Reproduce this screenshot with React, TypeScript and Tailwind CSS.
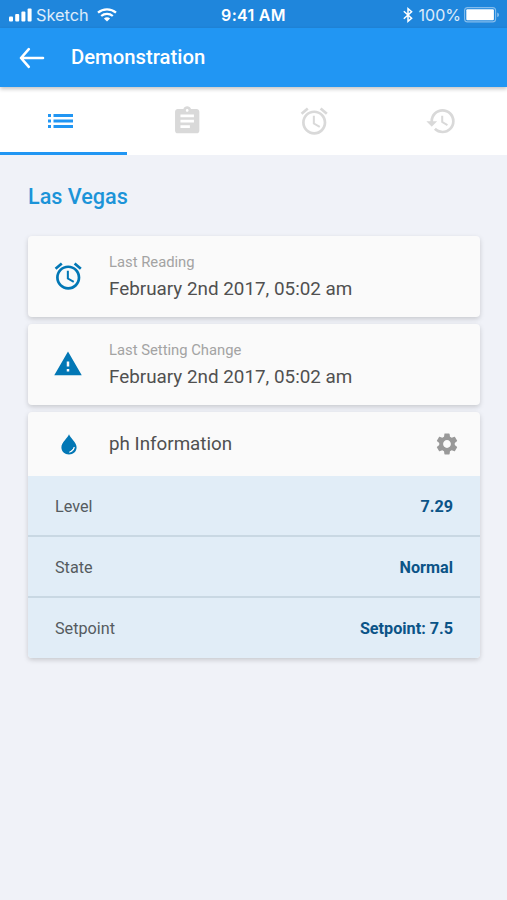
import React from "react";
import { MdAlarm, MdAssignment, MdHistory, MdSettings, MdWarning } from "react-icons/md";

const readings = [
  { label: "Level", value: "7.29" },
  { label: "State", value: "Normal" },
  { label: "Setpoint", value: "Setpoint: 7.5" },
];

function SignalIcon() {
  return (
    <svg width="23" height="14" viewBox="0 0 23 14" fill="currentColor">
      <rect x="0" y="8.5" width="4" height="5" rx="1" />
      <rect x="6.2" y="6" width="4" height="7.5" rx="1" />
      <rect x="12.4" y="3.5" width="4" height="10" rx="1" />
      <rect x="18.6" y="0.5" width="4" height="13" rx="1" />
    </svg>
  );
}

function WifiIcon() {
  return (
    <svg width="20" height="14" viewBox="0 0 20 14" fill="none" stroke="currentColor" strokeWidth="2.3">
      <path d="M1 4.7C6 0.3 14 0.3 19 4.7" />
      <path d="M4.2 8C7.5 5.1 12.5 5.1 15.8 8" />
      <path d="M10 13.5L6.9 10.4C8.6 8.9 11.4 8.9 13.1 10.4Z" fill="currentColor" stroke="none" />
    </svg>
  );
}

function BluetoothIcon() {
  return (
    <svg width="10" height="16" viewBox="0 0 10 16" fill="none" stroke="currentColor" strokeWidth="1.5">
      <path d="M0.8 4.3L8.6 11.3L5 14.3V1.7L8.6 4.7L0.8 11.7" />
    </svg>
  );
}

function BatteryIcon() {
  return (
    <svg width="36" height="16" viewBox="0 0 36 16" fill="none">
      <rect x="0.6" y="0.6" width="31" height="14.3" rx="3" stroke="#fff" strokeOpacity="0.45" strokeWidth="1.1" />
      <rect x="2.3" y="2.3" width="27.6" height="10.9" rx="1" fill="#fff" />
      <path d="M33.2 5.4C35.7 6.2 35.7 9.3 33.2 10.1Z" fill="#fff" fillOpacity="0.45" />
    </svg>
  );
}

function BackIcon() {
  return (
    <svg width="26" height="22" viewBox="0 0 26 22" fill="none" stroke="currentColor" strokeWidth="2.6" strokeLinecap="round" strokeLinejoin="round">
      <path d="M9.8 2.2L2 11L9.8 19.8M2 11H24" />
    </svg>
  );
}

function ListIcon() {
  return (
    <svg width="25" height="14" viewBox="0 0 25 14" fill="currentColor">
      <path d="M0 0H3V3H0ZM5.5 0H25V3H5.5ZM0 5.5H3V8.5H0ZM5.5 5.5H25V8.5H5.5ZM0 11H3V14H0ZM5.5 11H25V14H5.5Z" />
    </svg>
  );
}

function DropIcon() {
  return (
    <svg width="16" height="21" viewBox="0 0 16 21">
      <path d="M8 0.3C6.6 4.4 0.4 8.4 0.4 13.3C0.4 17.6 3.8 20.5 8 20.5C12.2 20.5 15.6 17.6 15.6 13.3C15.6 8.4 9.4 4.4 8 0.3Z" fill="#0277b5" />
      <path d="M13.2 13.2C13.1 16 11.2 17.7 8.5 18.1C10.6 16.9 12.2 15.6 13.2 13.2Z" fill="#fafafa" stroke="#fafafa" strokeWidth="1" strokeLinejoin="round" />
    </svg>
  );
}

interface InfoCardProps {
  icon: React.ReactNode;
  label: string;
  value: string;
}

function InfoCard({ icon, label, value }: InfoCardProps) {
  return (
    <div className="flex h-[81px] items-center rounded-[4px] bg-[#fafafa] shadow-[0_2px_5px_rgba(0,0,0,0.17)]">
      <div className="flex w-[81px] justify-center text-[#0277b5]">{icon}</div>
      <div className="pb-px">
        <p className="text-[14.8px] leading-[20px] text-[#a3a3a3]">{label}</p>
        <p className="mt-[5px] text-[18.85px] leading-[24px] text-[#505050]">{value}</p>
      </div>
    </div>
  );
}

export default function App() {
  return (
    <div className="h-[900px] w-[507px] overflow-hidden bg-[#f0f2f8] font-['Roboto',sans-serif]">
      {/* Status bar */}
      <div className="grid h-7 grid-cols-3 items-center bg-[#1f86dc] pr-[7px] pl-[9px] pt-[2px] font-['Inter',sans-serif] text-white">
        <div className="flex items-center">
          <SignalIcon />
          <span className="ml-[4px] mr-[8px] text-[16.3px] text-white/85">Sketch</span>
          <WifiIcon />
        </div>
        <span className="pr-[2px] text-center text-[16px] font-semibold tracking-[0.3px]">9:41 AM</span>
        <div className="flex items-center justify-end">
          <BluetoothIcon />
          <span className="ml-[6px] mr-[3px] text-[16px] text-white/85">100%</span>
          <BatteryIcon />
        </div>
      </div>

      {/* App bar */}
      <header className="relative flex h-[59px] items-center bg-[#2196f3] pl-[19px] text-white shadow-[0_2px_4px_rgba(0,0,0,0.24)]">
        <BackIcon />
        <h1 className="ml-[26px] text-[20.3px] font-medium">Demonstration</h1>
      </header>

      {/* Tabs */}
      <nav className="grid h-[68px] grid-cols-4 bg-white text-[#d9d9d9]">
        <div className="flex items-center justify-center border-b-[3px] border-[#2196f3] pt-[3px] pr-[6px] text-[#2196f3]">
          <ListIcon />
        </div>
        <div className="flex items-center justify-center pr-[6px]">
          <MdAssignment size={32.4} />
        </div>
        <div className="flex items-center justify-center pr-[6px]">
          <MdAlarm size={32.4} />
        </div>
        <div className="flex items-center justify-center pr-[5px]">
          <MdHistory size={32.4} />
        </div>
      </nav>

      <main className="pr-[27px] pl-[28px]">
        <h2 className="pt-[28px] text-[21.6px] leading-[28px] font-medium text-[#1c94d8]">Las Vegas</h2>

        <div className="mt-[25px] flex flex-col gap-[7px]">
          <InfoCard icon={<MdAlarm size={32.4} />} label="Last Reading" value="February 2nd 2017, 05:02 am" />
          <InfoCard icon={<MdWarning size={30} className="mr-px mb-[2px]" />} label="Last Setting Change" value="February 2nd 2017, 05:02 am" />

          <section className="overflow-hidden rounded-[4px] bg-[#fafafa] shadow-[0_2px_5px_rgba(0,0,0,0.17)]">
            <div className="flex h-[64px] items-center pr-[20px]">
              <div className="flex w-[81px] justify-center">
                <DropIcon />
              </div>
              <span className="text-[18.8px] text-[#505050]">ph Information</span>
              <MdSettings size={26} className="ml-auto text-[#999999]" />
            </div>
            <div className="divide-y-2 divide-[#c9d8e3] bg-[#e1edf7]">
              {readings.map((reading) => (
                <div key={reading.label} className="flex h-[61px] items-center justify-between px-[27px] pt-[3px] text-[16.2px] last:h-[60px] last:pt-[2px]">
                  <span className="text-[#555b60]">{reading.label}</span>
                  <span className="font-bold text-[#0b5487]">{reading.value}</span>
                </div>
              ))}
            </div>
          </section>
        </div>
      </main>
    </div>
  );
}
